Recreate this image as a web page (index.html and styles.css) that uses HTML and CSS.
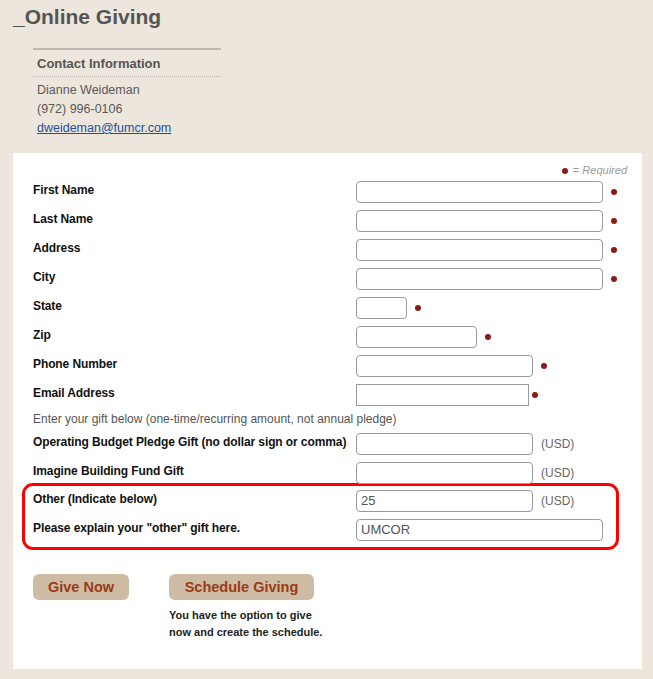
FILE: index.html
```html
<!DOCTYPE html>
<html lang="en">
<head>
    <meta charset="UTF-8">
    <title>Online Giving</title>
    <link rel="stylesheet" href="styles.css">
</head>
<body>
    <div class="page">
        <h1>_Online Giving</h1>

        <!-- Contact block -->
        <div class="contact">
            <h3>Contact Information</h3>
            <div class="contact-lines">
                <div>Dianne Weideman</div>
                <div>(972) 996-0106</div>
                <div><a href="#">dweideman@fumcr.com</a></div>
            </div>
        </div>

        <!-- Giving form -->
        <div class="panel">
            <div class="required-note"><span class="dot"></span> = <i>Required</i></div>
            <form action="#" method="post">
                <div class="row"><label>First Name</label><div class="field"><input type="text" class="w-full"><span class="dot"></span></div></div>
                <div class="row"><label>Last Name</label><div class="field"><input type="text" class="w-full"><span class="dot"></span></div></div>
                <div class="row"><label>Address</label><div class="field"><input type="text" class="w-full"><span class="dot"></span></div></div>
                <div class="row"><label>City</label><div class="field"><input type="text" class="w-full"><span class="dot"></span></div></div>
                <div class="row"><label>State</label><div class="field"><input type="text" class="w-state"><span class="dot"></span></div></div>
                <div class="row"><label>Zip</label><div class="field"><input type="text" class="w-zip"><span class="dot"></span></div></div>
                <div class="row"><label>Phone Number</label><div class="field"><input type="text" class="w-mid"><span class="dot"></span></div></div>
                <div class="row"><label>Email Address</label><div class="field"><input type="text" class="w-email"><span class="dot dot-near"></span></div></div>

                <div class="hint">Enter your gift below (one-time/recurring amount, not annual pledge)</div>

                <div class="row"><label>Operating Budget Pledge Gift (no dollar sign or comma)</label><div class="field"><input type="text" class="w-mid"><span class="usd">(USD)</span></div></div>
                <div class="row"><label>Imagine Building Fund Gift</label><div class="field"><input type="text" class="w-mid"><span class="usd">(USD)</span></div></div>

                <div class="highlight">
                    <div class="row"><label>Other (Indicate below)</label><div class="field"><input type="text" class="w-mid" value="25"><span class="usd">(USD)</span></div></div>
                    <div class="row"><label>Please explain your "other" gift here.</label><div class="field"><input type="text" class="w-full" value="UMCOR"></div></div>
                </div>

                <div class="actions">
                    <div class="action">
                        <button type="button" class="btn">Give Now</button>
                    </div>
                    <div class="action">
                        <button type="button" class="btn">Schedule Giving</button>
                        <p class="btn-note">You have the option to give<br>now and create the schedule.</p>
                    </div>
                </div>
            </form>
        </div>
    </div>
</body>
</html>
```

FILE: styles.css
```css
/* Basic reset */
* {
    margin: 0;
    padding: 0;
    box-sizing: border-box;
}

body {
    background: #ece6dc;
    font-family: "Liberation Sans", Arial, sans-serif;
    color: #555;
}

.page {
    padding: 4px 11px 11px 13px;
}

h1 {
    font-size: 21px;
    line-height: 26px;
    font-weight: bold;
    color: #555;
}

/* Contact block */
.contact {
    width: 188px;
    margin: 18px 0 0 20px;
    border-top: 2px solid #bdb8b2;
}

.contact h3 {
    font-size: 13px;
    line-height: 17px;
    padding: 5px 0 4px 4px;
    border-bottom: 1px dotted #bdb8b2;
    color: #555;
}

.contact-lines {
    margin-top: 4px;
    padding-left: 4px;
    font-size: 12.5px;
    line-height: 19px;
    color: #5a5a5a;
}

.contact-lines a {
    color: #1f4f9c;
}

/* White form panel */
.panel {
    width: 629px;
    margin-top: 15px;
    background: #fff;
    padding: 10px 15px 28px 20px;
}

.required-note {
    text-align: right;
    font-size: 11px;
    line-height: 14px;
    color: #999;
}

.required-note .dot {
    margin-right: 2px;
}

.row {
    display: grid;
    grid-template-columns: 323px 1fr;
    align-items: center;
    height: 29px;
}

.row label {
    font-size: 12px;
    font-weight: bold;
    color: #111;
    letter-spacing: -0.1px;
    padding-bottom: 3px;
}

.field {
    display: flex;
    align-items: center;
}

input[type="text"] {
    height: 22px;
    border: 1px solid #9a9a9a;
    border-radius: 4px;
    padding: 0 4px;
    font-family: "Liberation Sans", Arial, sans-serif;
    font-size: 13px;
    color: #555;
    background: #fff;
}

.w-full { width: 247px; }
.w-state { width: 51px; }
.w-zip { width: 121px; }
.w-mid { width: 177px; }
.w-email {
    width: 173px;
    border-radius: 0 !important;
}

.dot {
    display: inline-block;
    width: 6px;
    height: 6px;
    border-radius: 50%;
    background: #8b1b16;
    margin-left: 8px;
}

.dot-near {
    margin-left: 3px;
}

.usd {
    margin-left: 8px;
    font-size: 12px;
    color: #666;
}

.hint {
    font-size: 12px;
    line-height: 20px;
    color: #555;
}

/* Red outline around the "other" gift */
.highlight {
    margin: -4px 0 0 -11px;
    width: 597px;
    border: 3px solid #f00;
    border-radius: 11px;
    padding: 0 0 3px 8px;
}

/* Buttons */
.actions {
    display: flex;
    gap: 40px;
    margin-top: 24px;
}

.btn {
    height: 26px;
    padding: 0;
    border: none;
    border-radius: 6px;
    background: #cdbca3;
    color: #9c3a19;
    font-family: "Liberation Sans", Arial, sans-serif;
    font-size: 14.5px;
    font-weight: bold;
    white-space: nowrap;
    cursor: pointer;
}

.action:first-child .btn {
    width: 96px;
}

.action:last-child .btn {
    width: 145px;
}

.btn-note {
    margin-top: 7px;
    font-size: 11px;
    line-height: 17px;
    font-weight: bold;
    color: #222;
}
```
